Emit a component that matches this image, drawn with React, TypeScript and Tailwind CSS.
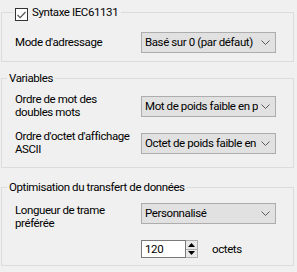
import type { ReactNode } from 'react'

function Combo({ text }: { text: string }) {
  return (
    <div className="flex h-[21px] w-[135px] shrink-0 items-center border border-[#adadad] bg-[#e1e1e1] pl-[3px] pr-[5px]">
      <span className="flex-1 overflow-hidden whitespace-nowrap leading-[13px]">{text}</span>
      <svg width="9" height="5" viewBox="0 0 9 5" className="ml-[3px] shrink-0">
        <path d="M0.5 0.5 L4.5 4.5 L8.5 0.5" fill="none" stroke="#5a5a5a" strokeWidth="1" />
      </svg>
    </div>
  )
}

function Group({
  legend,
  className,
  legendClass = 'left-[5px] px-[2px]',
  children,
}: {
  legend: ReactNode
  className: string
  legendClass?: string
  children: ReactNode
}) {
  return (
    <div className={`relative border border-[#dcdcdc] ${className}`}>
      <div className={`absolute -top-[7px] flex items-start bg-[#f0f0f0] leading-[13px] ${legendClass}`}>
        {legend}
      </div>
      {children}
    </div>
  )
}

function Checkbox() {
  return (
    <div className="mt-[2px] flex h-[13px] w-[13px] items-center justify-center border border-[#333333] bg-white">
      <svg width="9" height="8" viewBox="0 0 9 8">
        <path d="M0.5 4 L3.2 6.7 L8.5 1" fill="none" stroke="#555555" strokeWidth="1.2" />
      </svg>
    </div>
  )
}

function Spin() {
  return (
    <div className="flex h-[18px] items-stretch">
      <div className="flex w-[45px] items-center border border-[#7a7a7a] bg-white pl-[3px] leading-[13px]">120</div>
      <div className="flex w-[12px] flex-col border border-l-0 border-[#adadad] bg-[#e9e9e9]">
        <div className="flex flex-1 items-center justify-center border-b border-[#adadad]">
          <svg width="7" height="4" viewBox="0 0 7 4"><path d="M0 4 L3.5 0 L7 4 Z" fill="#000" /></svg>
        </div>
        <div className="flex flex-1 items-center justify-center">
          <svg width="7" height="4" viewBox="0 0 7 4"><path d="M0 0 L3.5 4 L7 0 Z" fill="#000" /></svg>
        </div>
      </div>
      <span className="ml-[14px] self-center leading-[13px]">octets</span>
    </div>
  )
}

export default function App() {
  return (
    <div className="h-[272px] w-[297px] bg-[#f0f0f0] pl-[1px] pt-[12px] font-['Roboto',Arial,sans-serif] text-[11.5px] tracking-[-0.4px] text-black">
      <div className="w-[293px]">
        <Group
          className="pb-[8px] pt-[19px]"
          legendClass="left-[12px] pl-[1px] pr-[3px]"
          legend={
            <div className="flex items-start gap-[4px]">
              <Checkbox />
              <span>Syntaxe IEC61131</span>
            </div>
          }
        >
          <div className="flex items-center pl-[13px]">
            <span className="w-[126px]">Mode d'adressage</span>
            <Combo text="Basé sur 0 (par défaut)" />
          </div>
        </Group>

        <Group className="mt-[16px] pb-[11px] pt-[14px]" legend={<span>Variables</span>}>
          <div className="flex flex-col gap-[11px] pl-[13px]">
            <div className="flex items-center">
              <span className="w-[126px] leading-[13px]">Ordre de mot des<br />doubles mots</span>
              <Combo text="Mot de poids faible en premier" />
            </div>
            <div className="flex items-center">
              <span className="w-[126px] leading-[13px]">Ordre d'octet d'affichage<br />ASCII</span>
              <Combo text="Octet de poids faible en premier" />
            </div>
          </div>
        </Group>

        <Group className="mt-[19px] pb-[7px] pt-[15px]" legend={<span>Optimisation du transfert de données</span>}>
          <div className="flex flex-col gap-[10px] pl-[13px]">
            <div className="flex items-start">
              <span className="w-[126px] pt-[1px] leading-[13px]">Longueur de trame<br />préférée</span>
              <Combo text="Personnalisé" />
            </div>
            <div className="pl-[126px]">
              <Spin />
            </div>
          </div>
        </Group>
      </div>
    </div>
  )
}
